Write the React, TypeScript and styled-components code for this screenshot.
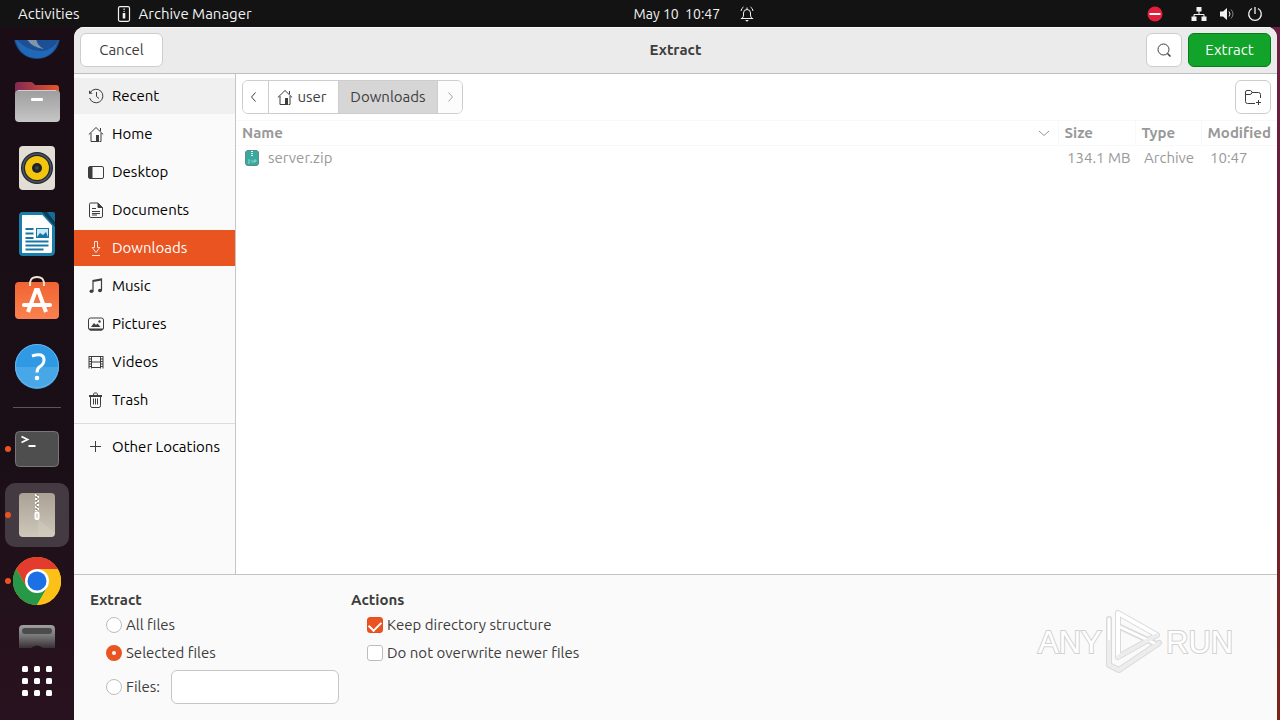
import React from "react";
import styled, { createGlobalStyle } from "styled-components";

const GlobalStyle = createGlobalStyle`
  * { box-sizing: border-box; }
  body { margin: 0; }
  body, button, input {
    font-family: Ubuntu, "Noto Sans", sans-serif;
    font-size: 15px;
    line-height: 20px;
  }
  button { cursor: default; }
`;

/* ---------- shell ---------- */

const Screen = styled.div`
  display: flex;
  flex-direction: column;
  height: 100vh;
  overflow: hidden;
  background: linear-gradient(#6d1d40, #6b1d35 50%, #7c2419);
`;

const TopBar = styled.header`
  display: grid;
  grid-template-columns: 49.5% auto 1fr;
  align-items: center;
  flex: none;
  height: 27px;
  background: #131313;
  color: #f2f2f2;
`;

const TopGroup = styled.div<{ $end?: boolean }>`
  display: flex;
  align-items: center;
  justify-content: ${(p) => (p.$end ? "flex-end" : "flex-start")};
  gap: ${(p) => (p.$end ? "12px" : "36px")};
  padding: ${(p) => (p.$end ? "0 17px 0 0" : "0 0 0 18px")};
`;

const TopButton = styled.button`
  display: flex;
  align-items: center;
  gap: 7px;
  padding: 0;
  border: 0;
  background: none;
  color: inherit;
  white-space: pre;
`;

const Clock = styled(TopButton)`
  gap: 19px;
  font-size: 14px;
`;

const NoEntry = styled.span`
  display: flex;
  margin-right: 16px;
`;

const Workspace = styled.div`
  display: flex;
  flex: 1;
  min-height: 0;
  padding-right: 3px;
  background: linear-gradient(90deg, #1a0f16 50%, transparent 50%);
`;

/* ---------- dock ---------- */

const Dock = styled.nav`
  display: flex;
  flex-direction: column;
  flex: none;
  width: 74px;
  padding-top: 13px;
  background: linear-gradient(#1a0d15, #1a0f16 60%, #29121f);
`;

const DockViewport = styled.div`
  flex: 1;
  min-height: 0;
  overflow: hidden;
`;

/* The launcher list is scrolled down by part of its first icon. */
const DockList = styled.ul`
  margin: -37px 0 0;
  padding: 0;
  list-style: none;
`;

const DockItem = styled.li`
  display: flex;
  align-items: center;
  height: 66px;
`;

const RunningDot = styled.span<{ $on?: boolean }>`
  width: 6px;
  height: 6px;
  margin: 0 -6px 0 5px;
  border-radius: 50%;
  z-index: 1;
  background: ${(p) => (p.$on ? "#e95420" : "transparent")};
`;

const DockButton = styled.button<{ $active?: boolean }>`
  display: flex;
  align-items: center;
  justify-content: center;
  width: 64px;
  height: 64px;
  padding: 0;
  border: 0;
  border-radius: 10px;
  background: ${(p) => (p.$active ? "#443a41" : "transparent")};
`;

const DockRule = styled.li`
  height: 1px;
  margin: 8px 13px;
  background: #5c545a;
`;

const AppsButton = styled.button`
  display: flex;
  justify-content: center;
  flex: none;
  height: 72px;
  padding: 17px 0 0;
  border: 0;
  background: none;
`;

/* ---------- dialog ---------- */

const Dialog = styled.main`
  display: flex;
  flex-direction: column;
  flex: 1;
  min-width: 0;
  border-radius: 10px 10px 0 0;
  overflow: hidden;
  background: #fff;
  color: #3d3d3d;
`;

const HeaderBar = styled.div`
  display: grid;
  grid-template-columns: 1fr auto 1fr;
  align-items: center;
  flex: none;
  height: 47px;
  padding: 0 6px;
  border-bottom: 1px solid #bfbfbf;
  background: #ebebeb;
  box-shadow: inset 0 1px #f8f8f8;
`;

const Title = styled.h1`
  margin: 0;
  font-size: 15px;
  line-height: 20px;
  font-weight: 700;
`;

const HeaderEnd = styled.div`
  display: flex;
  justify-content: flex-end;
  gap: 6px;
`;

const Button = styled.button<{ $primary?: boolean; $icon?: boolean }>`
  display: flex;
  align-items: center;
  justify-content: center;
  justify-self: start;
  width: ${(p) => (p.$icon ? "36px" : "83px")};
  height: 34px;
  padding: 0;
  border: 1px solid ${(p) => (p.$primary ? "#0b7a1b" : "#cdcdcd")};
  border-radius: 6px;
  background: ${(p) => (p.$primary ? "#12a32a" : "#fff")};
  color: ${(p) => (p.$primary ? "#fff" : "#3d3d3d")};
`;

const Body = styled.div`
  display: flex;
  flex: 1;
  min-height: 0;
`;

const Places = styled.ul`
  display: flex;
  flex-direction: column;
  flex: none;
  gap: 2px;
  width: 162px;
  margin: 0;
  padding: 4px 0 0;
  list-style: none;
  border-right: 1px solid #c6c6c6;
  background: #fafafa;
`;

const Place = styled.button<{ $state?: "hover" | "selected" }>`
  display: flex;
  align-items: center;
  gap: 8px;
  width: 100%;
  height: 36px;
  padding: 0 0 0 14px;
  border: 0;
  text-align: left;
  color: ${(p) => (p.$state === "selected" ? "#fff" : "#000")};
  background: ${(p) =>
    p.$state === "selected" ? "#e95420" : p.$state === "hover" ? "#f0f0f0" : "transparent"};
  svg { color: ${(p) => (p.$state === "selected" ? "#ffe4d9" : "#3d3d3d")}; }
`;

const PlaceRule = styled.li`
  height: 1px;
  margin: 3px 0;
  background: #dcdcdc;
`;

const Browser = styled.section`
  flex: 1;
  min-width: 0;
  overflow: hidden;
`;

const PathRow = styled.div`
  display: flex;
  justify-content: space-between;
  padding: 6px;
`;

const PathBar = styled.nav`
  display: flex;
  height: 34px;
  border: 1px solid #cdcdcd;
  border-radius: 6px;
  overflow: hidden;
`;

const Crumb = styled.button<{ $w: number; $current?: boolean }>`
  display: flex;
  align-items: center;
  justify-content: center;
  gap: 4px;
  width: ${(p) => p.$w}px;
  padding: 0 3px 0 0;
  border: 0;
  background: ${(p) => (p.$current ? "#d6d6d6" : "#fff")};
  color: #3d3d3d;
  & + & { border-left: 1px solid #cdcdcd; }
  &:disabled { padding: 0; color: #a5a5a5; background: #fcfcfc; }
  ${(p) => p.$current && "padding: 0;"}
`;

const FileTable = styled.table`
  width: 100%;
  table-layout: fixed;
  border-collapse: collapse;
  color: #999;
`;

const Th = styled.th<{ $w?: number }>`
  width: ${(p) => (p.$w ? `${p.$w}px` : "auto")};
  height: 25px;
  padding: 0 0 0 6px;
  text-align: left;
  white-space: nowrap;
  font-weight: 700;
  border-top: 1px solid #f8f8f8;
  border-bottom: 1px solid #f8f8f8;
  & + & { border-left: 1px solid #f8f8f8; }
`;

const SortHead = styled.span`
  display: flex;
  align-items: center;
  justify-content: space-between;
  padding-right: 6px;
`;

const Td = styled.td`
  height: 25px;
  padding: 0 0 0 9px;
  white-space: nowrap;
`;

const FileName = styled.span`
  display: flex;
  align-items: center;
  gap: 9px;
`;

/* ---------- options ---------- */

const Options = styled.form`
  display: flex;
  gap: 12px;
  flex: none;
  height: 146px;
  padding: 14px 16px 0;
  border-top: 1px solid #c3c3c3;
  background: #fafafa;
`;

const Group = styled.fieldset`
  min-width: 249px;
  margin: 0;
  padding: 0;
  border: 0;
`;

const Legend = styled.legend`
  padding: 0;
  line-height: 22px;
  font-weight: 700;
`;

const OptionRow = styled.div<{ $field?: boolean }>`
  display: flex;
  align-items: center;
  gap: 11px;
  height: ${(p) => (p.$field ? "34px" : "28px")};
  margin: ${(p) => (p.$field ? "3px 0 0 16px" : "0 0 0 16px")};
`;

const OptionLabel = styled.label`
  display: flex;
  align-items: center;
  gap: 4px;
  white-space: nowrap;
`;

const Radio = styled.input.attrs({ type: "radio" })`
  appearance: none;
  width: 16px;
  height: 16px;
  margin: 0;
  border: 1px solid #bdbdbd;
  border-radius: 50%;
  background: #fff;
  &:checked { border: 6px solid #e95420; }
`;

const Check = styled.input.attrs({ type: "checkbox" })`
  appearance: none;
  display: flex;
  justify-content: center;
  width: 16px;
  height: 16px;
  margin: 0;
  border: 1px solid #bdbdbd;
  border-radius: 3px;
  background: #fff;
  &:checked { border-color: #e2501e; background: #e95420; }
  &:checked::after {
    content: "";
    width: 10px;
    height: 6px;
    margin-top: 3px;
    border: solid #fff;
    border-width: 0 0 2px 2px;
    transform: rotate(-45deg);
  }
`;

const TextField = styled.input`
  flex: 1;
  min-width: 0;
  height: 34px;
  padding: 0 8px;
  border: 1px solid #c6c6c6;
  border-radius: 6px;
  background: #fff;
`;

const Watermark = styled.svg`
  position: absolute;
  right: 42px;
  bottom: 44px;
  pointer-events: none;
`;

/* ---------- drawings ---------- */

const paths: Record<string, React.ReactNode> = {
  recent: (
    <>
      <path d="M2.2 4.6A6.8 6.8 0 1 1 1.6 10" />
      <path d="M8.5 4v4.5l2.5 2" />
      <path d="M1 2.2v3.6h3.6z" fill="currentColor" stroke="none" />
    </>
  ),
  home: (
    <>
      <path d="M.8 8.5 8 1.5l7.2 7M3 7v8.5h5M13 7v8.5h-1.5M12.5 2v3" />
      <path d="M8 9h3v7H8z" fill="currentColor" stroke="none" />
    </>
  ),
  desktop: (
    <>
      <rect x=".5" y="2.5" width="15" height="12" rx="1.5" />
      <path d="M1 3h3.5v11H1z" fill="currentColor" stroke="none" />
    </>
  ),
  documents: (
    <>
      <path d="M1.5 2.2q0-1.2 1.2-1.2H10l4.500 4.500v8.500q0 1.500-1.200 1.500H2.700q-1.200 0-1.200-1.500zM4 6.500h4M4 9.500h8M4 11.500h8M4 13h5" />
      <path d="M10 1v4.500h4.500z" fill="currentColor" />
    </>
  ),
  downloads: <path d="M6.500 1.500h3v6h2.300L8 12.500 4.200 7.500h2.300zM4 15.500h8" />,
  music: (
    <>
      <path d="M5 13V2.500L13.500 1v11M5 3.500 13.500 2" strokeWidth="1.200" />
      <ellipse cx="3.500" cy="13.200" rx="2" ry="1.800" fill="currentColor" stroke="none" />
      <ellipse cx="12" cy="12.500" rx="2" ry="1.800" fill="currentColor" stroke="none" />
    </>
  ),
  pictures: (
    <>
      <rect x=".5" y="2" width="15" height="12" rx="2" />
      <path d="M1 12.500h14v1q-1 1-2 1H3q-1 0-2-1zM3 11l3-4 2 2 1.500-1.500L12.500 11z" fill="currentColor" stroke="none" />
      <circle cx="11.500" cy="5.500" r="1.200" fill="currentColor" stroke="none" />
    </>
  ),
  videos: (
    <>
      <path d="M3.500 2v12.500M12.500 2v12.500M3.500 2.500h9M3.500 8h9M3.500 13.500h9M1 2v12.500M15 2v12.500" />
      <path d="M2 2v12.500M14 2v12.500" strokeWidth="2" strokeDasharray="1 1.500" />
    </>
  ),
  trash: (
    <>
      <path d="M2.500 5v8.500q0 2 1.500 2h7q1.500 0 1.500-2V5M5.500 6.500v6M7.500 6.500v6M9.500 6.500v6M5.500 3q0-2 1-2h2q1 0 1 2" />
      <path d="M1 4h13" strokeWidth="2" />
    </>
  ),
  plus: <path d="M7.500 2v11M2 7.500h11" />,
  search: (
    <>
      <circle cx="7.500" cy="7.500" r="5.500" />
      <path d="m11.500 11.500 3 3" strokeWidth="1.500" />
    </>
  ),
  newFolder: (
    <path d="M10 14.500H2.500q-2 0-2-2V3q0-1.500 1.500-1.500h3.500q1 0 1.500 2h6.500q2 0 2 2V9M.5 5.500H5q1.500 0 2-2M13.500 11v5M11 13.500h5" />
  ),
  left: <path d="M9.500 3.500 5.500 8l4 4.500" />,
  right: <path d="m6.500 3.500 4 4.500-4 4.500" />,
  down: <path d="m3 6 5 4.500L13 6" />,
  archive: (
    <>
      <rect x="2.500" y=".7" width="11" height="14.600" rx="1.500" strokeWidth="1.200" />
      <path d="M7.500 2.500h1.200V4H7.500zM7.500 5h1.200v1H7.500zM6.700 7h2.600v5.500H6.700z" fill="currentColor" stroke="none" />
    </>
  ),
  bell: (
    <>
      <path d="M1.800 12.500h12.400M3 12.500q1.500-1.500 1.500-3.500V7q0-3.500 3.500-3.500T11.500 7v2q0 2 1.500 3.500M2 5q.3-2.700 2.500-4M14 5q-.3-2.700-2.500-4M8 1.500v2" />
      <path d="M6.300 14h3.400q-1.700 3-3.400 0z" fill="currentColor" stroke="none" />
    </>
  ),
  network: (
    <>
      <path d="M8 5v3.500M3 12V8.500h10V12" />
      <path d="M5.500 1h5v4.500h-5zM.5 10.500h5V15h-5zM10.500 10.500h5V15h-5z" fill="currentColor" stroke="none" />
    </>
  ),
  volume: (
    <>
      <path d="M1 5.500h3L8 2v12L4 10.500H1z" fill="currentColor" stroke="none" />
      <path d="M10 5.500q2 2.500 0 5" />
      <path d="M12 3.500q4 4.500 0 9" opacity=".5" />
    </>
  ),
  power: <path d="M5 2.500a6.300 6.300 0 1 0 6 0M8 1v7" strokeWidth="1.300" />,
};

const Icon = ({ name, size = 16 }: { name: string; size?: number }) => (
  <svg width={size} height={size} viewBox="0 0 16 16" fill="none" stroke="currentColor" aria-hidden="true">
    {paths[name]}
  </svg>
);

const Art = ({ children }: { children: React.ReactNode }) => (
  <svg width="48" height="48" viewBox="0 0 48 48" aria-hidden="true">{children}</svg>
);

const MailArt = () => (
  <Art>
    <circle cx="24" cy="24" r="23" fill="#1c4f93" />
    <path d="M2 26q5 20 22 20t22-20q-4 11-16 13Q14 40 2 26z" fill="#2068b8" />
    <path d="M13 26q6 10 18 11-7-3-8-11z" fill="#8195ab" />
  </Art>
);

const FilesArt = () => (
  <Art>
    <defs>
      <linearGradient id="tab"><stop stopColor="#812955" /><stop offset="1" stopColor="#e9542a" /></linearGradient>
      <linearGradient id="folder" x2="0" y2="1"><stop stopColor="#9d9d9d" /><stop offset="1" stopColor="#c6c6c6" /></linearGradient>
    </defs>
    <path d="M2 7q0-3 3-3h13q2 0 4 3h21q3 0 3 3v12H2z" fill="url(#tab)" />
    <rect x="2" y="12" width="45" height="32" rx="4" fill="url(#folder)" />
    <path d="M5 12.500h38" stroke="#cfcfcf" />
    <rect x="18" y="20" width="12" height="3" rx="1" fill="#fff" />
  </Art>
);

const SpeakerArt = () => (
  <Art>
    <rect x="6" y="2" width="36" height="44" rx="4" fill="#e2ddd5" />
    <circle cx="24" cy="24" r="16" fill="#25262a" />
    <circle cx="24" cy="24" r="14" fill="none" stroke="#47566a" strokeWidth="1.500" />
    <circle cx="24" cy="24" r="12" fill="#f3c50e" />
    <circle cx="24" cy="24" r="5" fill="#202226" />
    <circle cx="24" cy="24" r="2" fill="#374559" />
  </Art>
);

const WriterArt = () => (
  <Art>
    <path d="M32 2h8q2 0 2 2v9z" fill="#146d98" />
    <path d="M9.500 3.500H30L40.500 15v26q0 3.500-3 3.500h-28q-2 0-2-3V6q0-2.500 2-2.500z" fill="#fff" stroke="#197eab" strokeWidth="3" />
    <path d="M29 2h5l8 10v5z" fill="#0c3f5b" />
    <path d="M12.500 19h8M12.500 23.500h8M12.500 28h8M12.500 31.500h23M12.500 35.500h23M12.500 39.500h18" stroke="#1876a5" strokeWidth="2" />
    <rect x="23.500" y="18.500" width="12" height="9" fill="#cce9f6" stroke="#1876a5" />
    <path d="m24 27 3-4 3 2 3-3 2 5z" fill="#1876a5" />
  </Art>
);

const SoftwareArt = () => (
  <Art>
    <defs><linearGradient id="bag" x2="0" y2="1"><stop stopColor="#f06432" /><stop offset="1" stopColor="#fa8250" /></linearGradient></defs>
    <rect x="2" y="6" width="44" height="37" rx="4" fill="url(#bag)" />
    <path d="M17 10q-1-9 7-9t7 9" fill="none" stroke="#f3e2d2" strokeWidth="2" />
    <path d="m15 36 8-22h2l8 22" fill="none" stroke="#fff" strokeWidth="4" />
    <path d="M11 29h26" stroke="#fff" strokeWidth="4" strokeLinecap="round" />
  </Art>
);

const HelpArt = () => (
  <Art>
    <circle cx="24" cy="24" r="22" fill="#2f9ae3" />
    <path d="M2 25a22 22 0 0 0 44 0z" fill="#48a7e6" />
    <circle cx="24" cy="24" r="21.500" fill="none" stroke="#63b4ee" />
    <path d="M19 14q12-4 12 4 0 4-4 6.500-3 2-3 6" fill="none" stroke="#fff" strokeWidth="3" />
    <circle cx="24" cy="36" r="2.300" fill="#fff" />
  </Art>
);

const TerminalArt = () => (
  <Art>
    <rect x="2.500" y="6.500" width="43" height="35" rx="4" fill="#4e4e4e" stroke="#777" />
    <path d="m8.500 11.500 6 3-6 3M15.500 21h7" fill="none" stroke="#fff" strokeWidth="1.800" />
  </Art>
);

const ArchiveArt = () => (
  <Art>
    <defs><linearGradient id="box" x2="0" y2="1"><stop stopColor="#aaa294" /><stop offset="1" stopColor="#cdc8ba" /></linearGradient></defs>
    <rect x="6" y="2" width="36" height="44" rx="4" fill="url(#box)" />
    <path d="m25 28 17 14q0 4-4 4H25z" fill="#d5d0c4" opacity=".4" />
    <path d="M23 3v17" stroke="#fff" strokeWidth="2" strokeDasharray="2 2" />
    <path d="M25 5v17" stroke="#fff" strokeWidth="2" strokeDasharray="2 2" />
    <path d="M24 3v18" stroke="#5f594f" strokeWidth="1" strokeDasharray="1 2" />
    <rect x="22.500" y="21.500" width="3" height="6.500" rx="1" fill="none" stroke="#fff" strokeWidth="2" />
  </Art>
);

const ChromeArt = () => (
  <Art>
    <circle cx="24" cy="24" r="24" fill="#fbc116" />
    <path d="M3.200 12A24 24 0 0 1 44.800 12H24v12l-10.400 6z" fill="#e33b2e" />
    <path d="M3.200 12A24 24 0 0 0 24 48l10.400-18L24 24l-10.400 6z" fill="#279847" />
    <path d="M24 12h20.800A24 24 0 0 1 24 48l10.400-18z" fill="#fbc116" />
    <circle cx="24" cy="24" r="12" fill="#fff" />
    <circle cx="24" cy="24" r="9.500" fill="#1b70e6" />
  </Art>
);

const DiskArt = () => (
  <Art>
    <defs><linearGradient id="disk" x2="0" y2="1"><stop stopColor="#a0a0a0" /><stop offset=".25" stopColor="#777" /><stop offset=".55" stopColor="#33282f" /></linearGradient></defs>
    <rect x="6" y="2" width="36" height="44" rx="4" fill="url(#disk)" />
    <rect x="9" y="5" width="30" height="6" rx="3" fill="#4c4c4c" />
    <path d="M18 25q6-5 12 0z" fill="#21181d" />
  </Art>
);

const AppsArt = () => (
  <svg width="32" height="32" viewBox="0 0 32 32" fill="#fff" aria-hidden="true">
    {[1, 13, 25].map((y) => [1, 13, 25].map((x) => <rect key={`${x}-${y}`} x={x} y={y} width="6" height="6" rx="1.500" />))}
  </svg>
);

const ZipFile = () => (
  <svg width="14" height="16" viewBox="0 0 14 16" aria-hidden="true">
    <rect x=".5" y=".5" width="13" height="15" rx="2.500" fill="#3aa89f" stroke="#5e8a87" />
    <path d="M7 1v6" stroke="#d6fffa" strokeWidth="2" strokeDasharray="1 1" />
    <path d="M3 10h2l-2 3h2M7 10v3M9 13v-3h2v1.500H9" fill="none" stroke="#93ddd6" strokeWidth=".8" />
  </svg>
);

const NoEntrySign = () => (
  <svg width="16" height="16" viewBox="0 0 16 16" aria-hidden="true">
    <circle cx="8" cy="8" r="7.500" fill="#e2203b" />
    <path d="M2.500 8h11" stroke="#fff" strokeWidth="2" />
  </svg>
);

/* ---------- data ---------- */

const launchers = [
  { label: "Thunderbird", art: <MailArt /> },
  { label: "Files", art: <FilesArt /> },
  { label: "Rhythmbox", art: <SpeakerArt /> },
  { label: "LibreOffice Writer", art: <WriterArt /> },
  { label: "Ubuntu Software", art: <SoftwareArt /> },
  { label: "Help", art: <HelpArt /> },
];

const running = [
  { label: "Terminal", art: <TerminalArt />, on: true },
  { label: "Archive Manager", art: <ArchiveArt />, on: true, active: true },
  { label: "Google Chrome", art: <ChromeArt />, on: true },
  { label: "Disk", art: <DiskArt /> },
];

const places: { label: string; icon: string; state?: "hover" | "selected" }[] = [
  { label: "Recent", icon: "recent", state: "hover" },
  { label: "Home", icon: "home" },
  { label: "Desktop", icon: "desktop" },
  { label: "Documents", icon: "documents" },
  { label: "Downloads", icon: "downloads", state: "selected" },
  { label: "Music", icon: "music" },
  { label: "Pictures", icon: "pictures" },
  { label: "Videos", icon: "videos" },
  { label: "Trash", icon: "trash" },
];

const Launcher = ({ label, art, on, active }: { label: string; art: React.ReactNode; on?: boolean; active?: boolean }) => (
  <DockItem>
    <RunningDot $on={on} />
    <DockButton $active={active} aria-label={label}>{art}</DockButton>
  </DockItem>
);

export default function App() {
  return (
    <Screen>
      <GlobalStyle />
      <TopBar>
        <TopGroup>
          <TopButton>Activities</TopButton>
          <TopButton><Icon name="archive" />Archive Manager</TopButton>
        </TopGroup>
        <Clock>{"May 10  10:47"}<Icon name="bell" /></Clock>
        <TopGroup $end>
          <NoEntry><NoEntrySign /></NoEntry>
          <Icon name="network" />
          <Icon name="volume" />
          <Icon name="power" />
        </TopGroup>
      </TopBar>

      <Workspace>
        <Dock aria-label="Dock">
          <DockViewport>
            <DockList>
              {launchers.map((l) => <Launcher key={l.label} {...l} />)}
              <DockRule />
              {running.map((l) => <Launcher key={l.label} {...l} />)}
            </DockList>
          </DockViewport>
          <AppsButton aria-label="Show Applications"><AppsArt /></AppsButton>
        </Dock>

        <Dialog>
          <HeaderBar>
            <Button>Cancel</Button>
            <Title>Extract</Title>
            <HeaderEnd>
              <Button $icon aria-label="Search"><Icon name="search" /></Button>
              <Button $primary>Extract</Button>
            </HeaderEnd>
          </HeaderBar>

          <Body>
            <Places>
              {places.map((p) => (
                <li key={p.label}>
                  <Place $state={p.state}><Icon name={p.icon} />{p.label}</Place>
                </li>
              ))}
              <PlaceRule />
              <li><Place><Icon name="plus" />Other Locations</Place></li>
            </Places>

            <Browser>
              <PathRow>
                <PathBar aria-label="Path">
                  <Crumb $w={25} aria-label="Back"><Icon name="left" /></Crumb>
                  <Crumb $w={70}><Icon name="home" />user</Crumb>
                  <Crumb $w={99} $current>Downloads</Crumb>
                  <Crumb $w={25} disabled aria-label="Forward"><Icon name="right" /></Crumb>
                </PathBar>
                <Button $icon aria-label="Create Folder"><Icon name="newFolder" /></Button>
              </PathRow>
              <FileTable>
                <thead>
                  <tr>
                    <Th><SortHead>Name<Icon name="down" /></SortHead></Th>
                    <Th $w={77}>Size</Th>
                    <Th $w={66}>Type</Th>
                    <Th $w={76}>Modified</Th>
                  </tr>
                </thead>
                <tbody>
                  <tr>
                    <Td><FileName><ZipFile />server.zip</FileName></Td>
                    <Td>134.1 MB</Td>
                    <Td>Archive</Td>
                    <Td>10:47</Td>
                  </tr>
                </tbody>
              </FileTable>
            </Browser>
          </Body>

          <Options>
            <Group>
              <Legend>Extract</Legend>
              <OptionRow><OptionLabel><Radio name="scope" />All files</OptionLabel></OptionRow>
              <OptionRow><OptionLabel><Radio name="scope" defaultChecked />Selected files</OptionLabel></OptionRow>
              <OptionRow $field>
                <OptionLabel><Radio name="scope" />Files:</OptionLabel>
                <TextField aria-label="Files" size={1} />
              </OptionRow>
            </Group>
            <Group>
              <Legend>Actions</Legend>
              <OptionRow><OptionLabel><Check defaultChecked />Keep directory structure</OptionLabel></OptionRow>
              <OptionRow><OptionLabel><Check />Do not overwrite newer files</OptionLabel></OptionRow>
            </Group>
          </Options>
        </Dialog>
      </Workspace>

      <Watermark width="204" height="70" viewBox="0 0 204 70" aria-label="ANY RUN">
        <g fill="#fff" stroke="#d2d2d2" strokeWidth="2" paintOrder="stroke" fontFamily="'Liberation Sans Narrow', 'Liberation Sans', sans-serif" fontSize="31">
          <text x="4" y="47">ANY</text>
          <text x="132" y="47">RUN</text>
        </g>
        <g fill="none" strokeLinejoin="round" strokeLinecap="round">
          <path d="M84 7v44l39-22zM75 13v46l10 5 40-27M84 20l36 17" stroke="#dadada" strokeWidth="6" />
          <path d="M84 51V7l39 22" stroke="#fff" strokeWidth="4" />
          <path d="M84 20l36 17M75 36V13" stroke="#fff" strokeWidth="3" />
          <path d="M75 36v23l10 5 40-27M84 51l39-22" stroke="#ededed" strokeWidth="4" />
        </g>
      </Watermark>
    </Screen>
  );
}
